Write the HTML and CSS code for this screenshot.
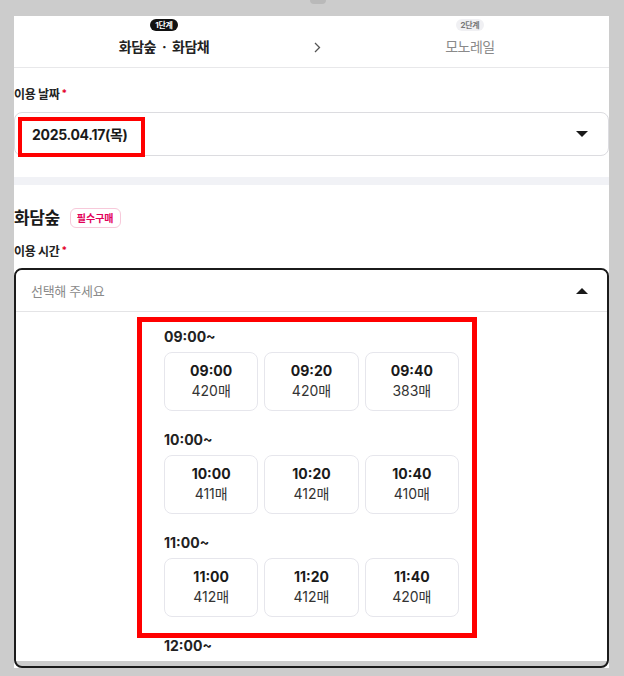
FILE: index.html
```html
<!DOCTYPE html>
<html lang="ko">
<head>
    <meta charset="UTF-8">
    <meta name="viewport" content="width=device-width, initial-scale=1.0">
    <title>화담숲 예매</title>
    <link rel="stylesheet" href="styles.css">
</head>
<body>
    <div class="top-bar">
        <span class="notch"></span>
    </div>

    <div class="panel">
        <div class="stepper">
            <div class="step step-current">
                <span class="step-badge">1단계</span>
                <span class="step-name">화담숲<span class="dot">·</span>화담채</span>
            </div>
            <div class="step-arrow">
                <svg width="7" height="11" viewBox="0 0 7 11"><path d="M1 1l4.5 4.5L1 10" fill="none" stroke="#555" stroke-width="1.3"/></svg>
            </div>
            <div class="step step-next">
                <span class="step-badge">2단계</span>
                <span class="step-name">모노레일</span>
            </div>
        </div>

        <div class="section">
            <div class="field-label">이용 날짜<span class="req">*</span></div>
            <div class="select">
                <span class="select-value">2025.04.17(목)</span>
                <span class="caret caret-down"></span>
                <span class="mark mark-date"></span>
            </div>
        </div>

        <div class="divider"></div>

        <div class="section section-time">
            <div class="title-row">
                <h2 class="title">화담숲</h2>
                <span class="tag">필수구매</span>
            </div>
            <div class="field-label">이용 시간<span class="req">*</span></div>

            <div class="dropdown">
                <div class="dropdown-head">
                    <span class="placeholder">선택해 주세요</span>
                    <span class="caret caret-up"></span>
                </div>
                <div class="time-list">
                    <div class="time-groups" id="timeGroups">
                        <!-- 시간대 목록이 여기에 표시됩니다 -->
                    </div>
                    <span class="mark mark-list"></span>
                </div>
            </div>
        </div>
    </div>

    <script>
        const slots = [
            { hour: '09:00~', times: [['09:00', 420], ['09:20', 420], ['09:40', 383]] },
            { hour: '10:00~', times: [['10:00', 411], ['10:20', 412], ['10:40', 410]] },
            { hour: '11:00~', times: [['11:00', 412], ['11:20', 412], ['11:40', 420]] },
            { hour: '12:00~', times: [['12:00', 420], ['12:20', 420], ['12:40', 420]] }
        ];

        const groupsEl = document.getElementById('timeGroups');
        slots.forEach(slot => {
            const group = document.createElement('div');
            group.className = 'time-group';
            let html = `<div class="group-label">${slot.hour}</div><div class="cards">`;
            slot.times.forEach(([time, count]) => {
                html += `<button class="card"><span class="card-time">${time}</span><span class="card-count">${count}매</span></button>`;
            });
            html += '</div>';
            group.innerHTML = html;
            groupsEl.appendChild(group);
        });
    </script>
</body>
</html>
```

FILE: styles.css
```css
html, body {
    margin: 0;
    height: 100%;
    overflow: hidden;
}
body {
    background-color: #cccccc;
    font-family: Inter, "Noto Sans CJK KR", sans-serif;
    color: #1f1f1f;
}
.top-bar {
    height: 16px;
    display: flex;
    justify-content: center;
}
.notch {
    width: 16px;
    height: 4px;
    margin-left: 12px;
    background-color: #b9b9b9;
    border-radius: 0 0 8px 8px;
}
.panel {
    width: 595px;
    margin-left: 14px;
    background-color: #fff;
}

/* 단계 표시 */
.stepper {
    display: grid;
    grid-template-columns: 300px 8px 1fr;
    align-items: end;
    padding: 3px 0 10px;
    border-bottom: 1px solid #e8e8ea;
}
.step {
    display: flex;
    flex-direction: column;
    align-items: center;
    gap: 6px;
}
.step-next {
    padding-left: 9px;
}
.step-badge {
    height: 12px;
    line-height: 12px;
    padding: 0 5px;
    border-radius: 6px;
    font-size: 8px;
    font-weight: 700;
    letter-spacing: -0.3px;
}
.step-current .step-badge {
    background-color: #111;
    color: #fff;
}
.step-next .step-badge {
    background-color: #f0f0f3;
    color: #777;
}
.step-name {
    font-size: 14px;
    line-height: 20px;
    letter-spacing: -0.5px;
}
.step-current .step-name {
    font-weight: 700;
    color: #222;
}
.step-next .step-name {
    color: #8a8a8a;
}
.dot {
    margin: 0 6px;
}
.step-arrow {
    height: 20px;
    display: flex;
    align-items: center;
}

/* 입력 영역 */
.section {
    padding: 15px 0 21px;
}
.section-time {
    padding: 22px 0 0;
}
.field-label {
    font-size: 12px;
    font-weight: 700;
    line-height: 20px;
    letter-spacing: -0.3px;
    color: #222;
}
.req {
    color: #e4002b;
    font-size: 10px;
    margin-left: 2px;
    vertical-align: 2px;
}
.select {
    position: relative;
    height: 42px;
    margin-top: 7px;
    border: 1px solid #dcdce0;
    border-radius: 8px;
    display: flex;
    align-items: center;
    justify-content: space-between;
    padding: 0 20px 0 17px;
}
.select-value {
    font-size: 14px;
    font-weight: 700;
    letter-spacing: -0.3px;
    color: #1a1a1a;
}
.caret {
    width: 0;
    height: 0;
    border-left: 6px solid transparent;
    border-right: 6px solid transparent;
}
.caret-down {
    border-top: 6px solid #1a1a1a;
}
.caret-up {
    border-bottom: 6px solid #1a1a1a;
}
.divider {
    height: 8px;
    background-color: #f1f2f6;
}

.title-row {
    display: flex;
    align-items: center;
    gap: 10px;
}
.title {
    margin: 0;
    font-size: 17px;
    line-height: 22px;
    font-weight: 700;
    letter-spacing: -0.4px;
    color: #1a1a1a;
}
.tag {
    height: 18px;
    line-height: 18px;
    padding: 0 6px;
    border: 1px solid #f7c9da;
    border-radius: 6px;
    font-size: 10px;
    font-weight: 700;
    color: #e2005a;
}
.section-time .field-label {
    margin-top: 11px;
}

/* 시간 선택 드롭다운 */
.dropdown {
    margin-top: 6px;
    border: 2px solid #1b1b1b;
    border-radius: 8px;
    background-color: #cccccc;
    padding-bottom: 5px;
    overflow: hidden;
}
.dropdown-head {
    height: 41px;
    background-color: #fff;
    border-bottom: 1px solid #e4e4e6;
    display: flex;
    align-items: center;
    justify-content: space-between;
    padding: 0 19px 0 15px;
}
.placeholder {
    font-size: 13px;
    color: #8a8a8a;
    letter-spacing: -0.3px;
}
.time-list {
    position: relative;
    height: 349px;
    overflow: hidden;
    background-color: #fff;
}
.time-groups {
    width: 295px;
    margin: 0 auto;
    padding-top: 15px;
}
.time-group {
    margin-bottom: 19px;
}
.group-label {
    font-size: 14px;
    font-weight: 700;
    line-height: 20px;
    color: #222;
}
.cards {
    display: grid;
    grid-template-columns: repeat(3, 1fr);
    gap: 6px;
    margin-top: 5px;
}
.card {
    display: flex;
    flex-direction: column;
    align-items: center;
    padding: 8px 0 9px;
    border: 1px solid #e6e6ec;
    border-radius: 8px;
    background-color: #fff;
    font-family: inherit;
    color: #1a1a1a;
}
.card-time {
    font-size: 14px;
    font-weight: 700;
    line-height: 20px;
}
.card-count {
    font-size: 14px;
    line-height: 20px;
    color: #333;
}

/* 강조 표시 (빨간 테두리) */
.mark {
    position: absolute;
    border: 4px solid #ff0000;
    box-sizing: border-box;
    pointer-events: none;
}
.mark-date {
    left: 3px;
    top: 4px;
    width: 127px;
    height: 40px;
}
.mark-list {
    left: 121px;
    top: 5px;
    width: 340px;
    height: 321px;
    border-width: 5px;
}
```
